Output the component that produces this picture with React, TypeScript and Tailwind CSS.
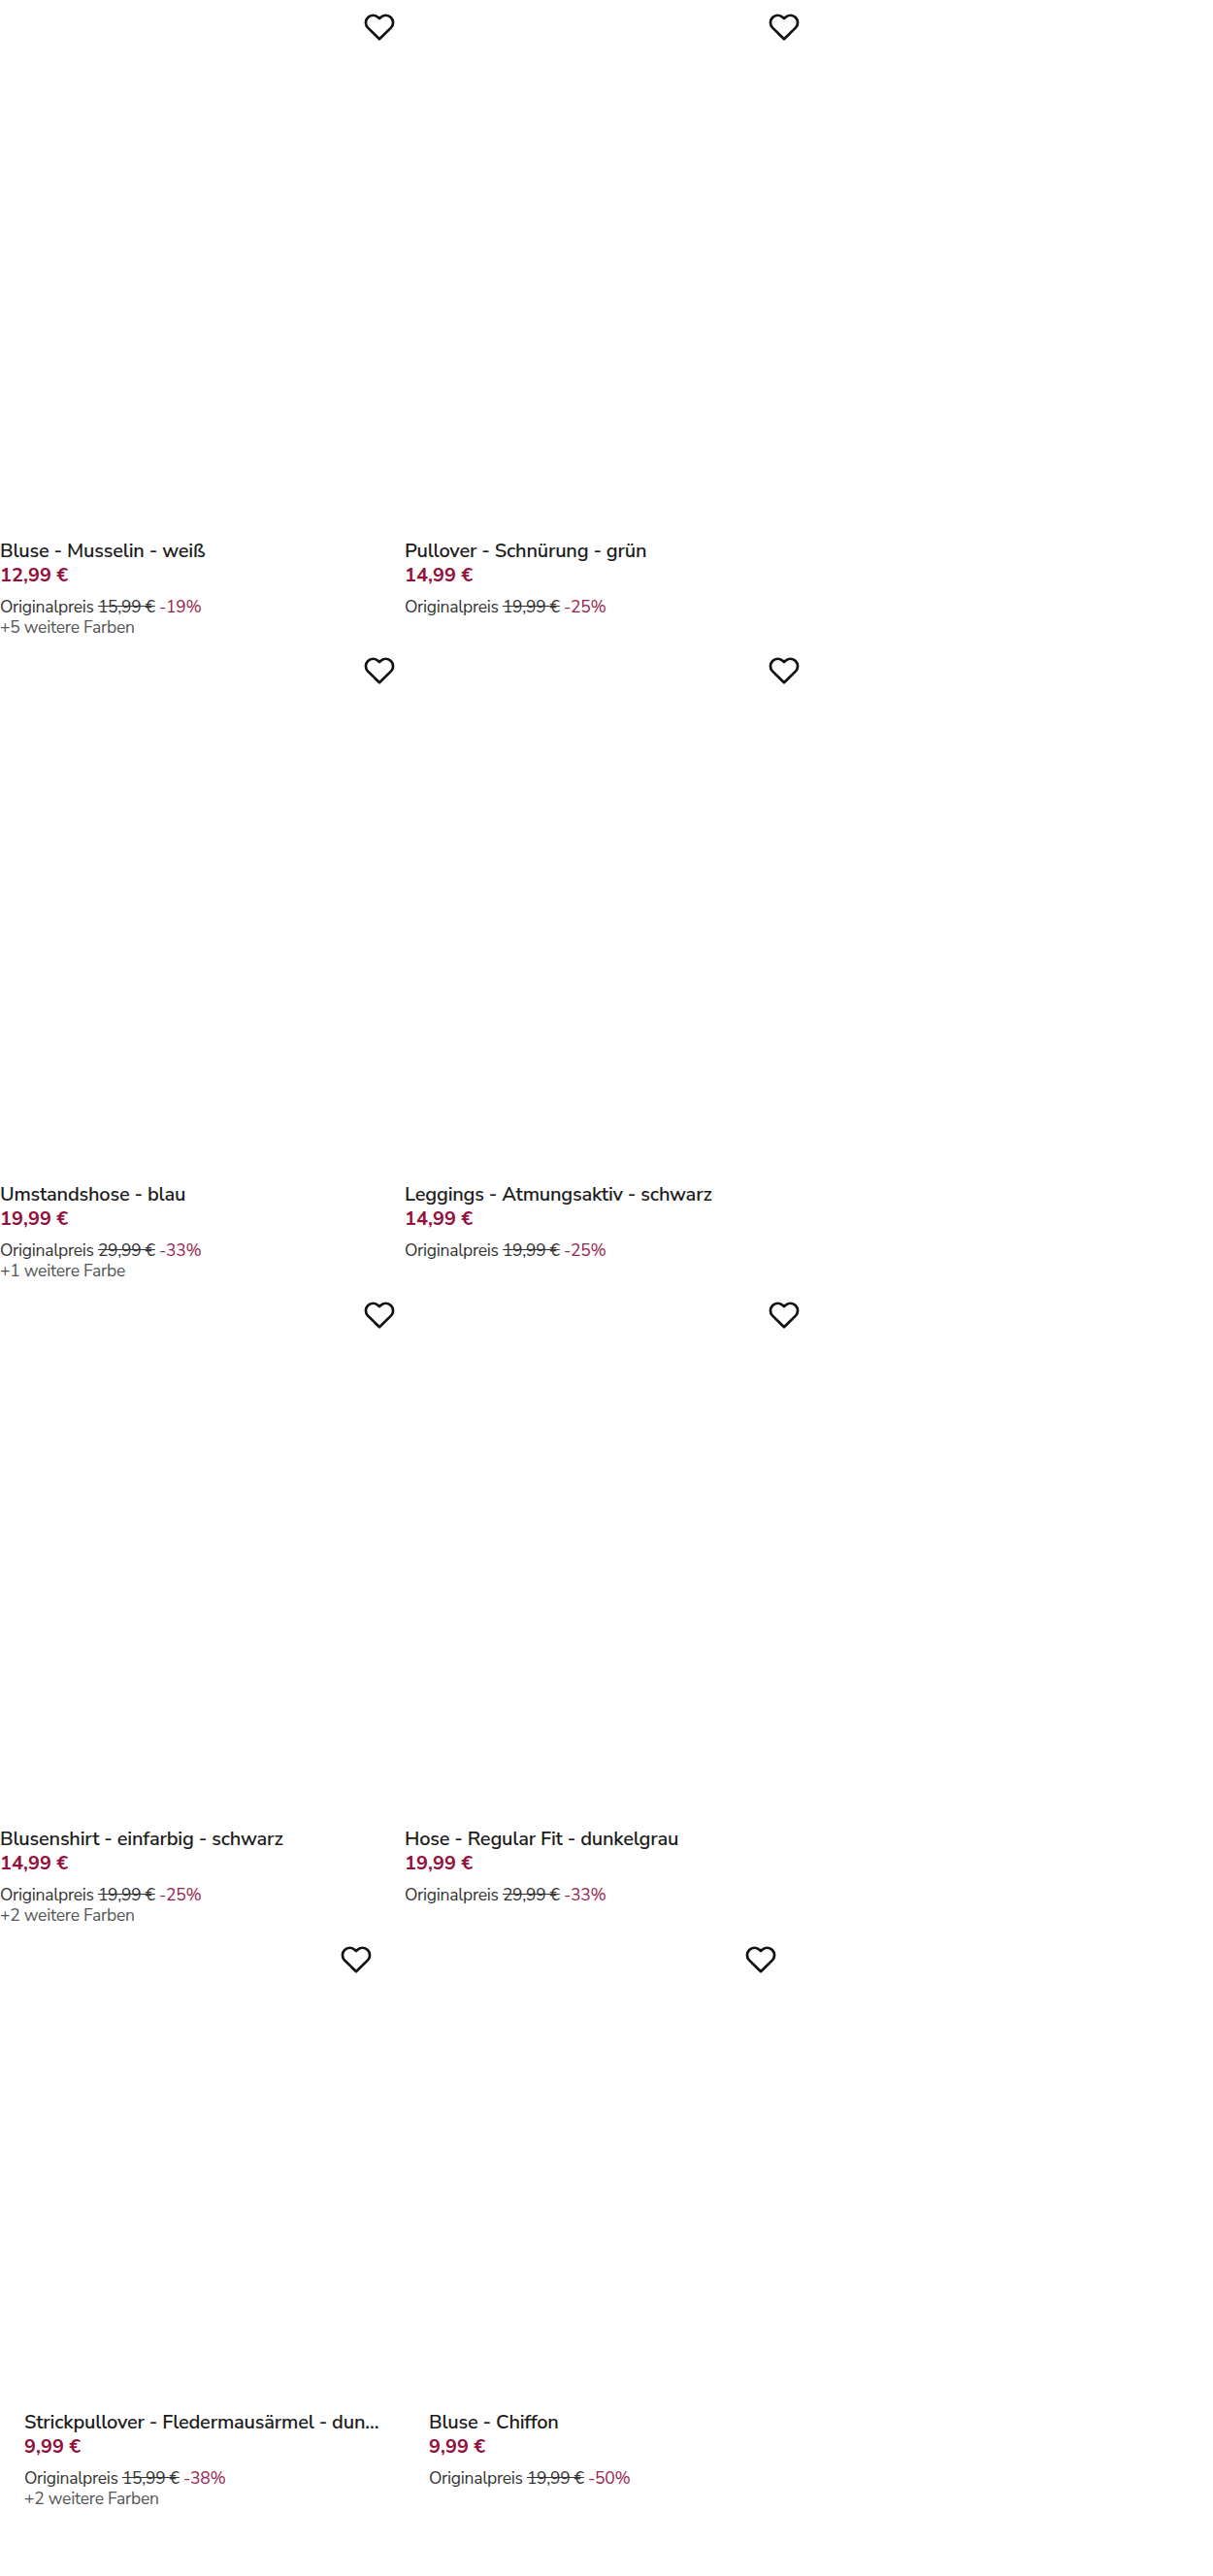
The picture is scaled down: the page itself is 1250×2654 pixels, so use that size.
import React from 'react';

type Product = {
    title: string;
    price: string;
    original: string;
    discount: string;
    colors?: string;
};

const ROWS: Product[][] = [
    [
        { title: 'Bluse - Musselin - weiß', price: '12,99 €', original: '15,99 €', discount: '-19%', colors: '+5 weitere Farben' },
        { title: 'Pullover - Schnürung - grün', price: '14,99 €', original: '19,99 €', discount: '-25%' },
    ],
    [
        { title: 'Umstandshose - blau', price: '19,99 €', original: '29,99 €', discount: '-33%', colors: '+1 weitere Farbe' },
        { title: 'Leggings - Atmungsaktiv - schwarz', price: '14,99 €', original: '19,99 €', discount: '-25%' },
    ],
    [
        { title: 'Blusenshirt - einfarbig - schwarz', price: '14,99 €', original: '19,99 €', discount: '-25%', colors: '+2 weitere Farben' },
        { title: 'Hose - Regular Fit - dunkelgrau', price: '19,99 €', original: '29,99 €', discount: '-33%' },
    ],
];

const LAST_ROW: Product[] = [
    { title: 'Strickpullover - Fledermausärmel - dunkelgrau', price: '9,99 €', original: '15,99 €', discount: '-38%', colors: '+2 weitere Farben' },
    { title: 'Bluse - Chiffon', price: '9,99 €', original: '19,99 €', discount: '-50%' },
];

const Heart = () => (
    <svg viewBox="0 0 24 24" className="block w-[36px] h-[36px]" fill="none" stroke="#111111" strokeWidth="1.8" strokeLinejoin="round">
        <path d="M12 20.2 4.1 12.4a5 5 0 0 1 0-7.1 5 5 0 0 1 7.1 0l.8.8.8-.8a5 5 0 0 1 7.1 0 5 5 0 0 1 0 7.1z" />
    </svg>
);

const ProductCard = ({ product, inset }: { product: Product; inset?: boolean }) => (
    <div className={inset ? 'h-[664px] px-[25px]' : 'h-[663.33px]'}>
        <div className={inset ? 'relative h-[493px]' : 'relative h-[555px]'}>
            <button className={inset ? 'absolute right-[7px] top-[11px]' : 'absolute right-[8px] top-[10px]'}>
                <Heart />
            </button>
        </div>
        <h3 className="truncate text-[20px] leading-[25px] tracking-[-0.2px] font-semibold text-[#1c1c1c]">{product.title}</h3>
        <p className="text-[20px] leading-[25px] font-bold text-[#93103c]">{product.price}</p>
        <p className="mt-[8px] text-[17.5px] leading-[24px] tracking-[-0.3px] text-[#333333]">
            Originalpreis <span className="line-through">{product.original}</span>{' '}
            <span className="text-[#96244f]">{product.discount}</span>
        </p>
        {product.colors && <p className="text-[17.5px] leading-[19px] tracking-[-0.25px] text-[#555555]">{product.colors}</p>}
    </div>
);

const App: React.FC = () => {
    return (
        <div className="w-[1250px] h-[2654px] bg-white overflow-hidden font-['Nunito_Sans','Open_Sans','Noto_Sans',sans-serif]">
            {ROWS.map((row, index) => (
                <div key={index} className="grid grid-cols-[417px_417px]">
                    {row.map((product) => (
                        <ProductCard key={product.title} product={product} />
                    ))}
                </div>
            ))}
            <div className="grid grid-cols-[417px_417px]">
                {LAST_ROW.map((product) => (
                    <ProductCard key={product.title} product={product} inset />
                ))}
            </div>
        </div>
    );
};

export default App;
